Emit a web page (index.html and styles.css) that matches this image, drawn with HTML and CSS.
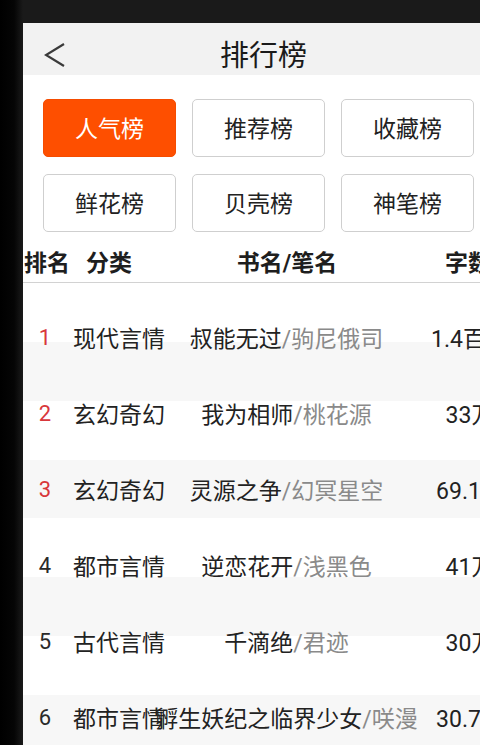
FILE: index.html
```html
<!DOCTYPE html>
<html lang="zh-CN">
<head>
<meta charset="utf-8">
<title>排行榜</title>
<link rel="stylesheet" href="styles.css">
</head>
<body>
<div class="screen">
  <header class="topbar">
    <div class="back">
      <svg width="24" height="26" viewBox="0 0 24 26"><polyline points="20,1 2,12 20,23" fill="none" stroke="#3a3a3a" stroke-width="2.2" stroke-linejoin="miter"/></svg>
    </div>
    <h1 class="title">排行榜</h1>
    <div></div>
  </header>

  <nav class="tabs">
    <div class="tab active">人气榜</div>
    <div class="tab">推荐榜</div>
    <div class="tab">收藏榜</div>
    <div class="tab">鲜花榜</div>
    <div class="tab">贝壳榜</div>
    <div class="tab">神笔榜</div>
  </nav>

  <div class="thead">
    <div class="h-rank">排名</div>
    <div class="h-cat">分类</div>
    <div class="h-title">书名/笔名</div>
    <div class="h-count">字数</div>
  </div>

  <div class="list">
    <div class="row">
      <div class="rank top">1</div>
      <div class="cat">现代言情</div>
      <div class="book"><span>叔能无过</span><span class="author">/驹尼俄司</span></div>
      <div class="count">1.4百万</div>
    </div>
    <div class="row">
      <div class="rank top">2</div>
      <div class="cat">玄幻奇幻</div>
      <div class="book"><span>我为相师</span><span class="author">/桃花源</span></div>
      <div class="count">33万</div>
    </div>
    <div class="row">
      <div class="rank top">3</div>
      <div class="cat">玄幻奇幻</div>
      <div class="book"><span>灵源之争</span><span class="author">/幻冥星空</span></div>
      <div class="count">69.1万</div>
    </div>
    <div class="row">
      <div class="rank">4</div>
      <div class="cat">都市言情</div>
      <div class="book"><span>逆恋花开</span><span class="author">/浅黑色</span></div>
      <div class="count">41万</div>
    </div>
    <div class="row">
      <div class="rank">5</div>
      <div class="cat">古代言情</div>
      <div class="book"><span>千滴绝</span><span class="author">/君迹</span></div>
      <div class="count">30万</div>
    </div>
    <div class="row">
      <div class="rank">6</div>
      <div class="cat">都市言情</div>
      <div class="book"><span>孵生妖纪之临界少女</span><span class="author">/咲漫</span></div>
      <div class="count">30.7万</div>
    </div>
  </div>
</div>
</body>
</html>
```

FILE: styles.css
```css
html, body {
  margin: 0;
  padding: 0;
  overflow: hidden;
  height: 745px;
}
body {
  background: linear-gradient(to right, #000 0, #050505 14px, #1a1a1a 23px);
  font-family: Roboto, "Noto Sans CJK SC", "Noto Sans", sans-serif;
  color: #222;
}
.screen {
  margin: 23px 0 0 23px;
  width: 481px;
  height: 722px;
  background: #fff;
  overflow: hidden;
}
.topbar {
  height: 52px;
  background: #f2f2f2;
  display: grid;
  grid-template-columns: 1fr auto 1fr;
  align-items: start;
}
.back {
  padding-left: 21px;
  height: 26px;
  margin-top: 20px;
}
.back svg { display: block; }
.title {
  margin: 19px 0 0;
  font-size: 29px;
  font-weight: 400;
  color: #1a1a1a;
  line-height: 29px;
  height: 33px;
  overflow: visible;
}
.tabs {
  display: grid;
  grid-template-columns: repeat(3, 133px);
  column-gap: 16px;
  row-gap: 17px;
  padding: 24px 0 0 20px;
}
.tab {
  height: 58px;
  box-sizing: border-box;
  border: 1px solid #cfcfcf;
  border-radius: 5px;
  display: flex;
  align-items: center;
  justify-content: center;
  padding-bottom: 3px;
  font-size: 23px;
  color: #222;
  background: #fff;
}
.tab.active {
  background: #fe4f00;
  border-color: #f54c00;
  color: #fff;
}
.thead {
  margin-top: 8px;
  height: 42px;
  border-bottom: 1px solid #d2d2d2;
  display: grid;
  grid-template-columns: 63px 83px 236px 130px;
  align-items: center;
  font-size: 23px;
  font-weight: 700;
  color: #1e1e1e;
  white-space: nowrap;
}
.h-rank { padding-left: 1px; }
.h-title { text-align: center; }
.h-count { padding-left: 40px; }
.list {
  padding-top: 16px;
  background: repeating-linear-gradient(to bottom, #fff 0, #fff 59px, #f7f7f7 59px, #f7f7f7 117.5px);
  height: 600px;
}
.row {
  height: 76px;
  display: grid;
  grid-template-columns: 48px 97px 237px 130px;
  align-items: center;
  font-size: 23px;
  white-space: nowrap;
}
.rank {
  text-align: center;
  font-size: 22px;
  color: #2a2a2a;
  padding-right: 4px;
}
.rank.top { color: #d8373b; }
.cat { padding-left: 2px; }
.book {
  display: flex;
  justify-content: center;
  min-width: 0;
}
.author { color: #8a8a8a; }
.count {
  display: flex;
  justify-content: center;
  min-width: 0;
}
```
